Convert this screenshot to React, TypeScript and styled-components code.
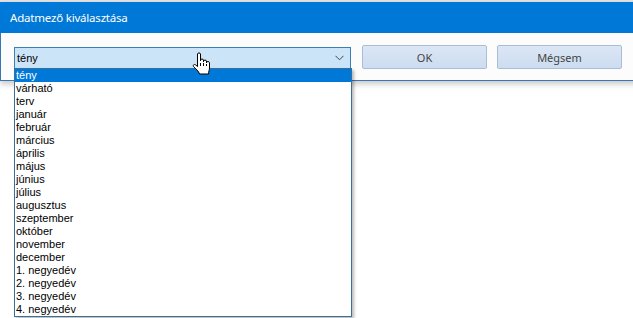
import React from "react";
import styled, { createGlobalStyle } from "styled-components";

const Global = createGlobalStyle`
  html, body { margin: 0; padding: 0; background: #ffffff; }
  body { width: 633px; height: 318px; overflow: hidden; }
  #root { width: 633px; height: 318px; }
`;

const Page = styled.div`
  width: 633px;
  height: 318px;
  background: #ffffff;
  border-top: 2px solid #e3e3e3;
  box-sizing: border-box;
  position: relative;
`;

const Window = styled.div`
  width: 640px;
  box-shadow: 0 3px 6px rgba(0, 0, 0, 0.22);
`;

const TitleBar = styled.div`
  height: 31px;
  background: #0078d7;
  display: flex;
  align-items: center;
  padding-left: 10px;
  box-sizing: border-box;
  font-family: "Segoe UI", "Noto Sans", sans-serif;
  font-size: 11.5px;
  color: #ffffff;
  letter-spacing: -0.2px;
`;

const Body = styled.div`
  height: 48px;
  background: #fcfcfc;
  border-left: 1px solid #3b76b4;
  border-bottom: 1px solid #3b76b4;
  box-sizing: border-box;
  display: flex;
  align-items: flex-start;
  padding: 12px 0 0 13px;
`;

const ComboWrap = styled.div`
  position: relative;
  width: 337px;
  margin-top: 2px;
`;

const Combo = styled.div`
  height: 22px;
  box-sizing: border-box;
  border: 1px solid #3c7fb1;
  background: #cce4f7;
  display: flex;
  align-items: center;
  justify-content: space-between;
  padding: 0 6px 0 2px;
  font-family: "Liberation Sans", Arial, sans-serif;
  font-size: 11px;
  color: #000;
`;

const DropList = styled.div`
  position: absolute;
  left: 0;
  top: 21px;
  width: 338px;
  box-sizing: border-box;
  border: 1px solid #3c6f98;
  background: #ffffff;
  box-shadow: 2px 2px 3px rgba(0, 0, 0, 0.28);
  z-index: 2;
`;

const Item = styled.div<{ $selected?: boolean }>`
  height: 13px;
  line-height: 13px;
  padding-left: 1px;
  font-family: "Liberation Sans", Arial, sans-serif;
  font-size: 11px;
  white-space: nowrap;
  background: ${(p) => (p.$selected ? "#0078d7" : "transparent")};
  color: ${(p) => (p.$selected ? "#ffffff" : "#000000")};
`;

const Buttons = styled.div`
  display: flex;
  gap: 10px;
  margin-left: 11px;
`;

const Button = styled.div`
  width: 125px;
  height: 24px;
  box-sizing: border-box;
  border: 1px solid #a9bed6;
  border-radius: 2px;
  background: linear-gradient(#dbe7f5, #cddcf0);
  display: flex;
  align-items: center;
  justify-content: center;
  font-family: "Segoe UI", "Noto Sans", sans-serif;
  font-size: 11px;
  color: #444444;
`;

const Cursor = styled.svg`
  position: absolute;
  left: 192px;
  top: 50px;
  z-index: 5;
`;

const items = [
  "tény",
  "várható",
  "terv",
  "január",
  "február",
  "március",
  "április",
  "május",
  "június",
  "július",
  "augusztus",
  "szeptember",
  "október",
  "november",
  "december",
  "1. negyedév",
  "2. negyedév",
  "3. negyedév",
  "4. negyedév",
];

export default function App() {
  return (
    <>
      <Global />
      <Page>
        <Window>
          <TitleBar>Adatmező kiválasztása</TitleBar>
          <Body>
            <ComboWrap>
              <Combo>
                <span>tény</span>
                <svg width="9" height="6" viewBox="0 0 9 6">
                  <path d="M0.5 0.8 L4.5 4.8 L8.5 0.8" fill="none" stroke="#444" strokeWidth="1" />
                </svg>
              </Combo>
              <DropList>
                {items.map((t, i) => (
                  <Item key={t} $selected={i === 0}>
                    {t}
                  </Item>
                ))}
              </DropList>
            </ComboWrap>
            <Buttons>
              <Button>OK</Button>
              <Button>Mégsem</Button>
            </Buttons>
          </Body>
        </Window>
        <Cursor width="19" height="23" viewBox="0 0 19 23">
          <path
            d="M5.5 2 C5.5 0.6 8.5 0.6 8.5 2 L8.5 9 L8.5 8 C8.5 6.8 11.5 6.8 11.5 8 L11.5 10 L11.5 9 C11.5 7.8 14.5 7.8 14.5 9 L14.5 11 L14.5 10.5 C14.5 9.3 17.5 9.3 17.5 10.5 L17.5 16 C17.5 18 16.5 19.5 16.5 22 L7.5 22 C7 19.5 3.5 16.5 1.5 14.5 C0.6 13.2 2.2 11.8 3.5 12.8 L5.5 14.5 Z"
            fill="#ffffff"
            stroke="#000000"
            strokeWidth="1"
            strokeLinejoin="round"
          />
          <path d="M8.5 11 V14 M11.5 11 V14 M14.5 12 V14" stroke="#000" strokeWidth="1" />
        </Cursor>
      </Page>
    </>
  );
}
